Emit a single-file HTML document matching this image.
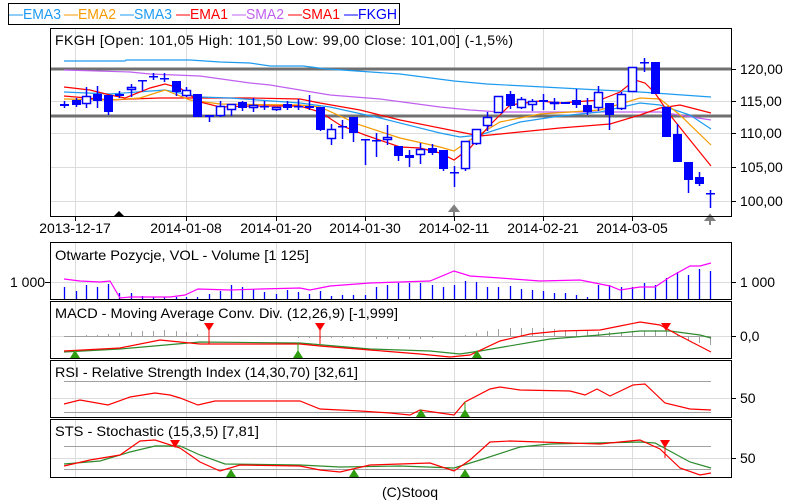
<!DOCTYPE html>
<html><head><meta charset="utf-8"><style>
body{margin:0;background:#fff;width:800px;height:500px;overflow:hidden}
svg{display:block;font-family:"Liberation Sans",sans-serif}
</style></head><body>
<svg id="s" width="800" height="500" xmlns="http://www.w3.org/2000/svg">
<rect x="8.5" y="3.5" width="391" height="21" fill="#fff" stroke="#000"/>
<g font-size="15">
<text x="9" y="19" fill="#1e9bf0" textLength="52" lengthAdjust="spacingAndGlyphs">—EMA3</text>
<text x="64" y="19" fill="#f59a00" textLength="52" lengthAdjust="spacingAndGlyphs">—EMA2</text>
<text x="120" y="19" fill="#1e9bf0" textLength="52" lengthAdjust="spacingAndGlyphs">—SMA3</text>
<text x="176" y="19" fill="#f00" textLength="52" lengthAdjust="spacingAndGlyphs">—EMA1</text>
<text x="232" y="19" fill="#c060f0" textLength="52" lengthAdjust="spacingAndGlyphs">—SMA2</text>
<text x="288" y="19" fill="#f00" textLength="52" lengthAdjust="spacingAndGlyphs">—SMA1</text>
<text x="344" y="19" fill="#00f" textLength="53" lengthAdjust="spacingAndGlyphs">—FKGH</text>
</g>
<g id="g"></g>
<g stroke="#000" fill="none">
<rect x="50.5" y="28.5" width="681" height="188"/>
<rect x="50.5" y="242.5" width="681" height="57"/>
<rect x="50.5" y="301.5" width="681" height="57"/>
<rect x="50.5" y="360.5" width="681" height="57"/>
<rect x="50.5" y="419.5" width="681" height="58"/>
</g>
<g font-size="14" fill="#000">
<text x="55" y="45" textLength="458" lengthAdjust="spacing">FKGH [Open: 101,05 High: 101,50 Low: 99,00 Close: 101,00] (-1,5%)</text>
<text x="55" y="260" textLength="254" lengthAdjust="spacingAndGlyphs">Otwarte Pozycje, VOL - Volume [1 125]</text>
<text x="55" y="318" textLength="343" lengthAdjust="spacingAndGlyphs">MACD - Moving Average Conv. Div. (12,26,9) [-1,999]</text>
<text x="55" y="377" textLength="303" lengthAdjust="spacingAndGlyphs">RSI - Relative Strength Index (14,30,70) [32,61]</text>
<text x="55" y="436" textLength="204" lengthAdjust="spacingAndGlyphs">STS - Stochastic (15,3,5) [7,81]</text>
<g text-anchor="middle">
<text x="75" y="233">2013-12-17</text><text x="186" y="233">2014-01-08</text><text x="276" y="233">2014-01-20</text>
<text x="365" y="233">2014-01-30</text><text x="454" y="233">2014-02-11</text><text x="543" y="233">2014-02-21</text>
<text x="632" y="233">2014-03-05</text>
<text x="410" y="497">(C)Stooq</text>
</g>
<text x="740" y="74">120,00</text><text x="740" y="106">115,00</text><text x="740" y="138">110,00</text>
<text x="740" y="172">105,00</text><text x="740" y="206">100,00</text>
<text x="740" y="287">1 000</text><text x="10" y="287">1 000</text>
<text x="740" y="341">0,0</text><text x="740" y="403">50</text><text x="740" y="463">50</text>
</g>
</svg>
<script>
const N='http://www.w3.org/2000/svg',g=document.getElementById('g');
function el(t,a){const e=document.createElementNS(N,t);for(const k in a)e.setAttribute(k,a[k]);g.appendChild(e);return e}
function pl(p,c,w){el('polyline',{points:p.map(q=>q.join(',')).join(' '),fill:'none',stroke:c,'stroke-width':w||1.2})}
const vx=[75,186,276,365,454,543,632];
vx.forEach(x=>{[[29,216],[243,299],[302,358],[361,417],[420,477]].forEach(r=>el('line',{x1:x+.5,x2:x+.5,y1:r[0],y2:r[1],stroke:'#dcdcdc'}));el('line',{x1:x+.5,x2:x+.5,y1:217,y2:221,stroke:'#000'})});
[69,101,133,167,201,282,336,398,458].forEach(y=>el('line',{x1:51,x2:731,y1:y+.5,y2:y+.5,stroke:'#dcdcdc'}));
[69,101,133,167,201,282,336,398,458].forEach(y=>el('line',{x1:731,x2:736,y1:y+.5,y2:y+.5,stroke:'#000'}));
el('line',{x1:45,x2:50,y1:282.5,y2:282.5,stroke:'#000'});
[[381],[412],[446],[469]].forEach(y=>el('line',{x1:64,x2:711,y1:y[0]+.5,y2:y[0]+.5,stroke:'#a0a0a0'}));
el('line',{x1:64,x2:711,y1:336.5,y2:336.5,stroke:'#a0a0a0'});
el('line',{x1:51,x2:731,y1:69,y2:69,stroke:'#707070','stroke-width':3});
el('line',{x1:51,x2:731,y1:116,y2:116,stroke:'#707070','stroke-width':3});
pl([[64,61],[125,61],[126,60],[190,60],[220,62],[250,63],[270,66],[303,66],[327,69],[400,74],[454,81],[487,84],[600,90],[640,92],[711,97]],'#1e9bf0');
pl([[64,70],[130,72],[150,74],[200,76],[250,83],[270,85],[330,95],[380,99],[440,107],[470,110],[500,112],[660,112],[711,120]],'#c060f0');
pl([[64,96],[110,100],[130,99],[160,98],[250,98],[300,99],[320,103],[360,110],[400,120],[450,130],[480,136],[510,133],[560,128],[610,124],[640,115],[660,108],[680,105],[711,113]],'#f00');
pl([[64,92],[110,94],[165,90],[200,97],[230,98],[300,103],[330,107],[380,118],[440,133],[460,137],[480,135],[520,122],[560,116],[600,112],[640,103],[660,105],[690,115],[711,129]],'#1e9bf0');
pl([[64,99],[110,100],[140,98],[165,90],[190,100],[220,104],[300,105],[320,107],[360,125],[400,138],[440,147],[454,151],[470,140],[500,122],[540,114],[600,110],[640,98],[660,99],[680,115],[711,145]],'#f59a00');
pl([[64,87],[90,90],[110,95],[125,98],[150,88],[165,84],[180,88],[190,95],[200,102],[220,107],[250,106],[300,106],[320,112],[340,125],[365,135],[400,147],[420,148],[440,153],[454,160],[470,148],[490,125],[510,105],[540,101],[560,103],[600,100],[620,92],[635,80],[645,83],[655,93],[670,115],[690,140],[711,166]],'#f00');
const C=[[64,104,106,1,101,108],[76,100,105,1,98,107],[86,96,104,0,87,108],[97,94,101,1,86,108],[108,95,112,1,95,115],[119,94,96,1,91,98],[131,87,90,0,84,97],[142,80,81,1,80,91],[153,76,77,1,73,80],[164,78,78,1,73,82],[176,81,92,1,81,96],[186,90,96,0,87,97],[197,94,117,1,94,117],[209,115,117,1,115,122],[220,106,116,0,101,117],[231,104,110,0,104,116],[242,102,108,1,101,111],[253,105,108,0,98,112],[264,106,106,1,101,110],[276,107,110,0,107,111],[287,104,108,1,101,110],[298,106,106,1,99,110],[309,106,108,1,95,110],[320,107,130,1,107,131],[331,129,139,0,124,145],[342,126,126,1,120,139],[353,117,133,1,117,142],[365,139,140,1,139,165],[376,140,140,1,133,157],[387,137,140,0,125,145],[398,146,156,1,146,161],[409,155,158,1,150,167],[420,149,155,0,143,164],[432,148,153,1,144,155],[443,150,169,1,150,171],[454,172,173,1,166,187],[465,141,169,0,141,171],[476,129,144,0,129,145],[487,117,126,0,112,131],[498,96,113,0,96,113],[510,94,106,1,91,109],[521,99,108,0,97,109],[532,101,105,0,99,111],[543,100,102,1,94,110],[554,102,104,0,98,110],[565,102,104,1,102,104],[576,100,105,1,89,108],[587,105,112,1,98,115],[598,92,108,0,86,111],[609,103,115,1,103,130],[621,94,109,0,92,110],[632,67,92,0,67,92],[644,62,63,1,58,72],[655,62,94,1,62,94],[666,107,137,1,107,137],[677,134,162,1,124,162],[688,162,180,1,162,193],[699,177,184,1,172,186],[710,193,194,1,190,208]];
C.forEach(c=>{el('line',{x1:c[0]+.5,x2:c[0]+.5,y1:c[4],y2:c[5],stroke:'#00f','stroke-width':1.5});
 const h=Math.max(c[2]-c[1],1.5);
 if(c[3])el('rect',{x:c[0]-4,y:c[1],width:9,height:h,fill:'#00f'});
 else el('rect',{x:c[0]-3.5,y:c[1]+.5,width:8,height:h-1,fill:'#fff',stroke:'#00f','stroke-width':1.5});});
el('polygon',{points:'114,216 119,211 124,216',fill:'#000'});
el('path',{d:'M454,216V209M450,211L454,206L458,211Z',stroke:'#808080','stroke-width':2,fill:'#808080'});
el('path',{d:'M710,225V218M706,220L710,215L714,220Z',stroke:'#808080','stroke-width':2,fill:'#808080'});
const vh=[12,8,14,12,15,0,0,3,2,2,2,2,2,5,8,14,12,10,7,5,9,7,5,8,3,4,4,4,12,14,16,16,16,14,12,14,18,17,12,12,13,10,9,8,6,6,4,2,14,14,12,12,16,14,21,27,24,30,28,14,20];
C.forEach((c,i)=>{const h=vh[i]||6;if(h>1)el('line',{x1:c[0]+.5,x2:c[0]+.5,y1:299-h,y2:299,stroke:'#00f','stroke-width':1.3})});
pl([[64,279],[80,281],[100,282],[110,281],[120,298],[130,297],[170,297],[185,295],[198,289],[230,290],[260,289],[300,288],[310,290],[330,286],[370,283],[400,282],[430,281],[454,271],[470,276],[500,278],[540,281],[580,280],[610,286],[620,290],[640,287],[655,287],[670,277],[690,266],[700,266],[711,263]],'#f0f');
C.forEach((c,i)=>{const y=336,h=[0,0,1,1,2,3,4,5,5,6,5,4,2,0,0,0,0,0,0,-1,-1,-2,-2,-2,-2,-2,-2,-2,-3,-3,-3,-3,-3,-2,-1,0,1,3,5,7,8,8,8,8,7,6,5,5,4,4,4,4,5,6,5,1,-4,-7,-9,-11][i]||0;if(h)el('line',{x1:c[0]+.5,x2:c[0]+.5,y1:y,y2:y-h,stroke:'#a0a0a0'})});
pl([[64,352],[120,349],[200,342],[300,343],[370,349],[430,351],[460,354],[480,351],[550,339],[600,335],[640,331],[670,331],[700,335],[711,338]],'#2e8b2e');
pl([[64,351],[120,348],[160,340],[200,344],[220,344],[300,344],[320,346],[370,350],[420,354],[450,357],[470,355],[500,341],[530,334],[560,331],[600,330],[620,326],[640,322],[660,325],[680,336],[711,352]],'#f00');
function up(x,y){el('polygon',{points:`${x-5},${y} ${x},${y-8} ${x+5},${y}`,fill:'#2e9e10'})}
function dn(x,y,y2){el('line',{x1:x,x2:x,y1:y,y2:y2,stroke:'#f00'});el('polygon',{points:`${x-5},${y-3} ${x},${y+5} ${x+5},${y-3}`,fill:'#f00'})}
up(75,358);up(298,358);up(477,358);dn(209,326,344);dn(320,326,344);dn(666,326,328);
el('line',{x1:298,x2:298,y1:343,y2:352,stroke:'#2e9e10'});
pl([[64,404],[80,400],[108,405],[130,397],[155,393],[170,395],[180,398],[198,405],[215,401],[300,401],[320,409],[360,411],[390,413],[410,415],[420,410],[440,413],[454,415],[465,402],[490,389],[500,387],[520,390],[570,391],[585,395],[597,389],[610,396],[633,385],[645,384],[665,403],[690,409],[711,410]],'#f00');
up(421,417);up(465,417);el('line',{x1:465,x2:465,y1:402,y2:410,stroke:'#2e9e10'});
pl([[64,464],[100,461],[130,452],[155,446],[180,446],[200,455],[225,464],[300,465],[340,467],[400,466],[454,468],[480,460],[520,447],[550,444],[640,442],[655,443],[690,462],[711,468]],'#2e8b2e');
pl([[64,466],[90,460],[120,455],[140,441],[155,440],[180,448],[200,462],[220,471],[240,465],[300,466],[320,470],[340,472],[370,465],[400,464],[430,463],[454,471],[470,460],[490,442],[510,441],[600,444],[640,440],[660,449],[680,468],[700,475],[711,473]],'#f00');
dn(175,443,447);dn(665,443,458);up(231,477);up(354,477);up(465,477);
</script>
</body></html>
